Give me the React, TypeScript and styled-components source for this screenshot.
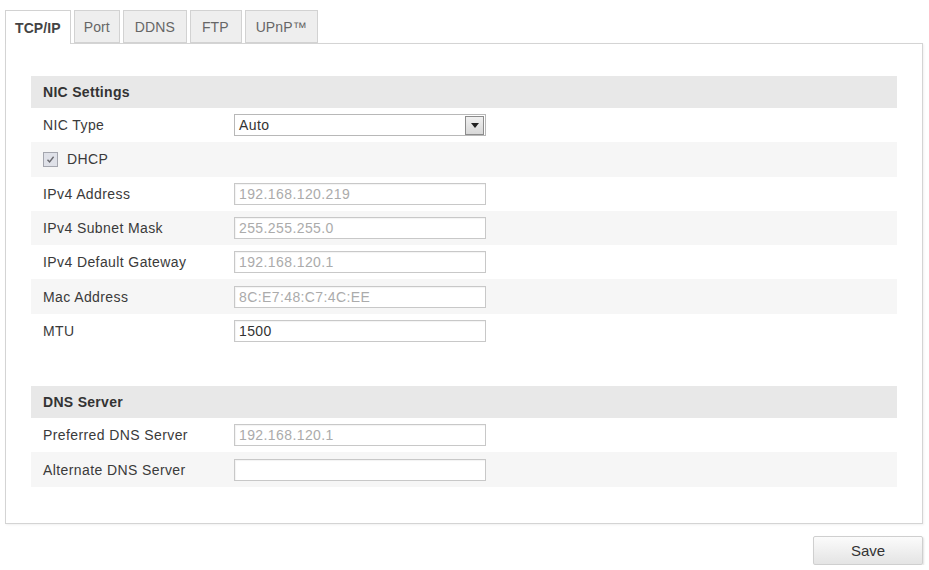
import React from "react";
import styled, { createGlobalStyle } from "styled-components";

const GlobalStyle = createGlobalStyle`
    body {
        margin: 0;
        background: #ffffff;
        font-family: "Liberation Sans", Arial, sans-serif;
        color: #333333;
    }
`;

const tabs = ["TCP/IP", "Port", "DDNS", "FTP", "UPnP™"];

interface IField {
    label: string;
    value?: string;
    disabled?: boolean;
    kind?: "input" | "select" | "check";
}

const nicFields: IField[] = [
    { label: "NIC Type", value: "Auto", kind: "select" },
    { label: "DHCP", kind: "check" },
    { label: "IPv4 Address", value: "192.168.120.219", disabled: true },
    { label: "IPv4 Subnet Mask", value: "255.255.255.0", disabled: true },
    { label: "IPv4 Default Gateway", value: "192.168.120.1", disabled: true },
    { label: "Mac Address", value: "8C:E7:48:C7:4C:EE", disabled: true },
    { label: "MTU", value: "1500" },
];

const dnsFields: IField[] = [
    { label: "Preferred DNS Server", value: "192.168.120.1", disabled: true },
    { label: "Alternate DNS Server", value: "" },
];

const FieldRow: React.FC<{ field: IField; shaded: boolean }> = ({ field, shaded }) => {
    if (field.kind === "check") {
        return (
            <Row $shaded={shaded}>
                <CheckLabel>
                    <CheckBox>
                        <svg width="9" height="9" viewBox="0 0 9 9">
                            <path d="M1.5 4.8 L3.6 7 L7.6 1.8" fill="none" stroke="#6a6a70" strokeWidth="1.4" />
                        </svg>
                    </CheckBox>
                    {field.label}
                </CheckLabel>
            </Row>
        );
    }
    return (
        <Row $shaded={shaded}>
            <Label>{field.label}</Label>
            {field.kind === "select" ? (
                <Select>
                    <span>{field.value}</span>
                    <Arrow>
                        <svg width="8" height="5" viewBox="0 0 8 5">
                            <path d="M0 0 H8 L4 5 Z" fill="#222" />
                        </svg>
                    </Arrow>
                </Select>
            ) : (
                <Field $disabled={field.disabled}>{field.value}</Field>
            )}
        </Row>
    );
};

const Section: React.FC<{ title: string; fields: IField[] }> = ({ title, fields }) => (
    <SectionWrapper>
        <SectionHeader>{title}</SectionHeader>
        {fields.map((f, i) => (
            <FieldRow key={f.label} field={f} shaded={i % 2 === 1} />
        ))}
    </SectionWrapper>
);

export default function App() {
    return (
        <>
            <GlobalStyle />
            <Page>
                <TabBar>
                    {tabs.map((t, i) => (
                        <Tab key={t} $active={i === 0}>
                            {t}
                        </Tab>
                    ))}
                </TabBar>
                <Panel>
                    <Section title="NIC Settings" fields={nicFields} />
                    <Section title="DNS Server" fields={dnsFields} />
                </Panel>
                <Footer>
                    <SaveButton>Save</SaveButton>
                </Footer>
            </Page>
        </>
    );
}

const Page = styled.div`
    width: 918px;
    padding: 10px 0 0 5px;
`;

const TabBar = styled.div`
    display: flex;
    gap: 3px;
    position: relative;
    z-index: 1;
`;

const Tab = styled.div<{ $active?: boolean }>`
    height: ${({ $active }) => ($active ? "33px" : "31px")};
    padding: 0 9px;
    display: flex;
    align-items: center;
    font-size: 14px;
    letter-spacing: 0.1px;
    font-weight: ${({ $active }) => ($active ? 700 : 400)};
    color: ${({ $active }) => ($active ? "#444" : "#666")};
    background: ${({ $active }) => ($active ? "#ffffff" : "#eeeeee")};
    border: 1px solid #d2d2d2;
    border-bottom: ${({ $active }) => ($active ? "none" : "1px solid #d2d2d2")};
    &:nth-child(3) {
        padding: 0 11px;
    }
    &:nth-child(4) {
        padding: 0 12px 0 11px;
    }
    &:nth-child(5) {
        padding: 0 10px;
    }
`;

const Panel = styled.div`
    margin-top: -1px;
    border: 1px solid #d4d4d4;
    box-shadow: 1px 1px 2px rgba(0, 0, 0, 0.06);
    padding: 32px 25px 36px 25px;
    display: flex;
    flex-direction: column;
    gap: 38px;
`;

const SectionWrapper = styled.div`
    display: flex;
    flex-direction: column;
`;

const SectionHeader = styled.div`
    height: 32px;
    padding-left: 12px;
    display: flex;
    align-items: center;
    background: #e8e8e8;
    font-size: 14px;
    font-weight: 700;
    letter-spacing: 0.3px;
    color: #333;
`;

const Row = styled.div<{ $shaded?: boolean }>`
    height: 34.3px;
    padding-left: 12px;
    display: flex;
    align-items: center;
    background: ${({ $shaded }) => ($shaded ? "#f6f6f6" : "#ffffff")};
`;

const Label = styled.div`
    width: 191px;
    font-size: 14px;
    letter-spacing: 0.4px;
    color: #3a3a3a;
`;

const Field = styled.div<{ $disabled?: boolean }>`
    width: 246px;
    height: 20px;
    padding-left: 4px;
    border: 1px solid #c8c8c8;
    box-shadow: inset 1px 1px 1px rgba(0, 0, 0, 0.05);
    background: #ffffff;
    display: flex;
    align-items: center;
    font-size: 14px;
    letter-spacing: 0.4px;
    color: ${({ $disabled }) => ($disabled ? "#ababab" : "#333")};
`;

const Select = styled.div`
    width: 250px;
    height: 20px;
    border: 1px solid #b8b8b8;
    background: #ffffff;
    display: flex;
    align-items: center;
    justify-content: space-between;
    font-size: 14px;
    letter-spacing: 0.4px;
    color: #333;
    & > span {
        padding-left: 4px;
    }
`;

const Arrow = styled.div`
    width: 17px;
    height: 17px;
    margin-right: 1px;
    border: 1px solid #8c8c8c;
    background: linear-gradient(#f0f0f0, #d8d8d8);
    display: flex;
    align-items: center;
    justify-content: center;
`;

const CheckLabel = styled.label`
    display: flex;
    align-items: center;
    gap: 9px;
    font-size: 14px;
    letter-spacing: 0.4px;
    color: #3a3a3a;
`;

const CheckBox = styled.span`
    width: 13px;
    height: 13px;
    border: 1px solid #a4a6ae;
    background: #dfe1e8;
    display: flex;
    align-items: center;
    justify-content: center;
`;

const Footer = styled.div`
    display: flex;
    justify-content: flex-end;
    padding-top: 12px;
`;

const SaveButton = styled.button`
    width: 110px;
    height: 29px;
    border: 1px solid #cfcfcf;
    border-radius: 2px;
    background: linear-gradient(#fbfbfb, #e4e4e4);
    box-shadow: 1px 1px 2px rgba(0, 0, 0, 0.12);
    font-family: "Liberation Sans", Arial, sans-serif;
    font-size: 15px;
    color: #333;
`;
